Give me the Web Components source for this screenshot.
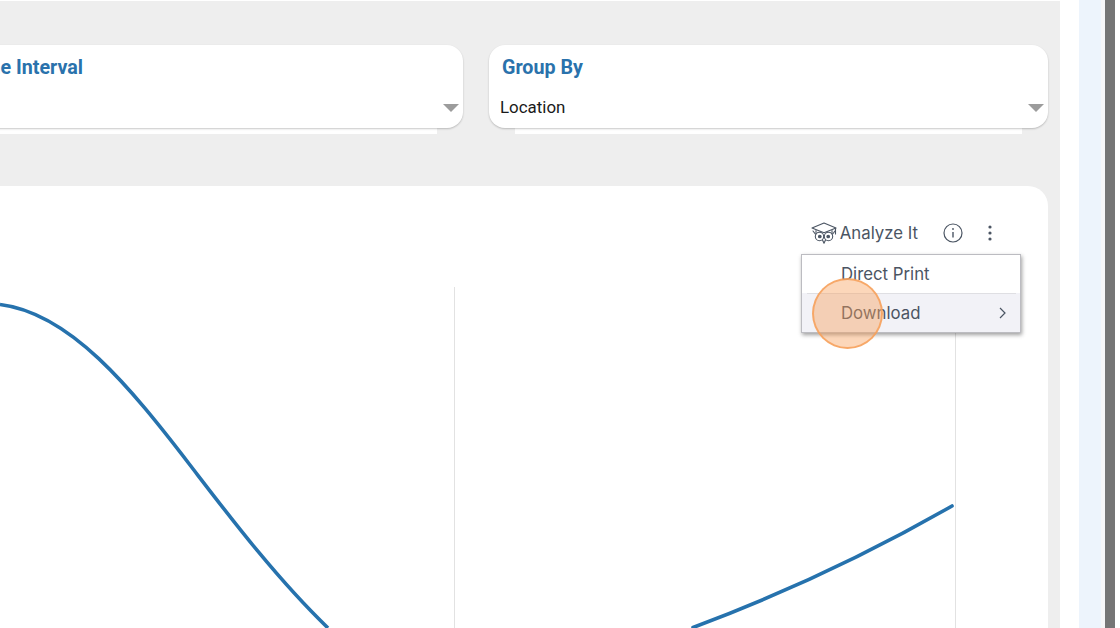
<!DOCTYPE html>
<html>
<head>
<meta charset="utf-8">
<style>
html, body { margin: 0; height: 100%; overflow: hidden; background: #fff; }
</style>
</head>
<body>
<app-shell>
  <filter-card slot="filters" label="Time Interval" style="flex:0 0 510px;margin-left:-47px" strip="26"></filter-card>
  <filter-card slot="filters" label="Group By" value="Location" style="flex:1" strip="26"></filter-card>
  <chart-card slot="chart"></chart-card>
</app-shell>
<script>
class AppShell extends HTMLElement {
    constructor() {
        super();
        this.attachShadow({ mode: "open" });
        this.shadowRoot.innerHTML = `
<style>
:host { display: flex; width: 1120px; height: 628px; overflow: hidden; }
#main { width: 1060px; flex: none; box-sizing: border-box; margin-top: 1px; padding: 44px 12px 0 0; background: #eeeeee; display: flex; flex-direction: column; overflow: hidden; }
#filters { display: flex; gap: 26px; height: 89px; flex: none; }
#chart { display: block; margin: 52px 0 0 -100px; flex: 1; min-height: 0; }
#gap { width: 19px; flex: none; }
#side { width: 22px; flex: none; background: #edf4fc; }
#rail { width: 4px; flex: none; background: #f6f6f8; }
#bar { width: 10px; flex: none; background: #757575; }
</style>
<div id="main">
  <div id="filters"><slot name="filters"></slot></div>
  <div id="chart"><slot name="chart"></slot></div>
</div>
<div id="gap"></div><div id="side"></div><div id="rail"></div><div id="bar"></div>`;
    }
}
customElements.define("app-shell", AppShell);

class FilterCard extends HTMLElement {
    constructor() {
        super();
        this.attachShadow({ mode: "open" });
    }
    connectedCallback() {
        const strip = this.getAttribute("strip") || 26;
        this.shadowRoot.innerHTML = `
<style>
:host { display: block; }
#card { position: relative; z-index: 1; box-sizing: border-box; height: 83px; background: #fff; border-radius: 16px; box-shadow: 0 1px 2px rgba(0,0,0,.22); padding: 12px 4px 0 11px; display: flex; flex-direction: column; }
#label { font: 700 19.700px/22px Roboto, sans-serif; color: #2a72ac; padding-left: 2px; }
#row { display: flex; align-items: center; justify-content: space-between; margin-top: 17px; height: 24px; }
#value { font: 400 16.900px/22px Roboto, sans-serif; color: #1a1a1a; padding-bottom: 2px; }
#arrow { width: 0; height: 0; border-left: 8px solid transparent; border-right: 8px solid transparent; border-top: 8px solid #9c9c9c; }
#strip { height: 6px; background: #fff; margin: 0 ${strip}px; }
</style>
<div id="card">
  <div id="label">${this.getAttribute("label")}</div>
  <div id="row"><span id="value">${this.getAttribute("value") || ""}</span><span id="arrow"></span></div>
</div>
<div id="strip"></div>`;
    }
}
customElements.define("filter-card", FilterCard);

class OwlIcon extends HTMLElement {
    constructor() {
        super();
        this.attachShadow({ mode: "open" });
        this.shadowRoot.innerHTML = `
<style>:host { display: block; width: 26px; height: 22px; } svg { display: block; }</style>
<svg width="26" height="22" viewBox="0 0 26 22" fill="none" stroke="#4b5563" stroke-width="1.100" stroke-linejoin="round" stroke-linecap="round">
  <path d="M1 6 13 1l12 5-12 4.800z"/>
  <path d="M5 8.500V12M21 8.500V12"/>
  <path d="M24.500 6.500V12"/>
  <circle cx="8.500" cy="14.500" r="4.200"/>
  <circle cx="17.500" cy="14.500" r="4.200"/>
  <circle cx="8.800" cy="14.500" r="1.300" fill="#4b5563"/>
  <circle cx="17.200" cy="14.500" r="1.300" fill="#4b5563"/>
  <path d="M11.500 18 13 21.300l1.500-3.300"/>
  <path d="M4.300 12 2 9M21.700 12 24 9"/>
</svg>`;
    }
}
customElements.define("owl-icon", OwlIcon);

class MenuItem extends HTMLElement {
    constructor() {
        super();
        this.attachShadow({ mode: "open" });
    }
    connectedCallback() {
        const more = this.hasAttribute("more");
        this.shadowRoot.innerHTML = `
<style>
:host { display: flex; align-items: center; justify-content: space-between; box-sizing: border-box; height: 38px; padding: 0 14px 0 39px; font: 400 16.800px/38px Inter, sans-serif; color: #4b5563; }
:host([active]) { height: 39px; padding-top: 1px; background: linear-gradient(#dfdfe3, #dfdfe3) 5px 0 / 209px 1px no-repeat, #f2f2f7; }
svg { display: block; }
</style>
<slot></slot>
${more ? `<svg width="7" height="12" viewBox="0 0 7 12" fill="none" stroke="#4b5563" stroke-width="1.200"><path d="M1 1l5 5-5 5"/></svg>` : ""}`;
    }
}
customElements.define("menu-item", MenuItem);

class PopupMenu extends HTMLElement {
    constructor() {
        super();
        this.attachShadow({ mode: "open" });
        this.shadowRoot.innerHTML = `
<style>
:host { display: block; position: absolute; left: 901px; top: 68px; width: 220px; box-sizing: border-box; background: #fff; border: 1px solid #bcbcc1; box-shadow: 1px 2px 4px rgba(0,0,0,.38); z-index: 2; }
</style>
<slot></slot>`;
    }
}
customElements.define("popup-menu", PopupMenu);

class ChartToolbar extends HTMLElement {
    constructor() {
        super();
        this.attachShadow({ mode: "open" });
        this.shadowRoot.innerHTML = `
<style>
:host { display: flex; align-items: center; justify-content: flex-end; height: 24px; padding: 35px 56px 0 0; color: #4b5563; }
#analyze { display: flex; align-items: center; gap: 3px; font: 400 16.800px/24px Inter, sans-serif; margin-right: 25px; }
svg { display: block; }
#dots { margin-left: 25px; }
</style>
<span id="analyze"><owl-icon></owl-icon>Analyze It</span>
<svg width="20" height="20" viewBox="0 0 20 20" fill="none" stroke="#4b5563" stroke-width="1.200"><circle cx="10" cy="10" r="9"/><path d="M10 9v5.500" stroke-width="1.400"/><circle cx="10" cy="6" r=".9" fill="#4b5563" stroke="none"/></svg>
<svg id="dots" width="4" height="16" viewBox="0 0 4 16" fill="#4b5563"><circle cx="2" cy="2" r="1.600"/><circle cx="2" cy="8" r="1.600"/><circle cx="2" cy="14" r="1.600"/></svg>`;
    }
}
customElements.define("chart-toolbar", ChartToolbar);

class ChartCard extends HTMLElement {
    constructor() {
        super();
        this.attachShadow({ mode: "open" });
        this.shadowRoot.innerHTML = `
<style>
:host { display: block; position: relative; height: 100%; background: #fff; border-radius: 20px 20px 0 0; }
#plot { position: absolute; left: 100px; top: 0; }
#tap { position: absolute; left: 912px; top: 92px; width: 71px; height: 71px; box-sizing: border-box; border-radius: 50%; background: rgba(247,160,90,.42); border: 2px solid rgba(247,160,90,.85); z-index: 3; }
</style>
<svg id="plot" width="1048" height="442" viewBox="0 186 1048 442" fill="none">
  <path d="M454.500 287V628M955.500 287V628" stroke="#e2e2e2"/>
  <path d="M0 304.500C70 313 130 387 190 465C225 510.500 275 577 328 628" stroke="#2672ad" stroke-width="3.600"/>
  <path d="M693 627.500C780 595 870 553 952 506" stroke="#2672ad" stroke-width="3.600" stroke-linecap="round"/>
</svg>
<chart-toolbar></chart-toolbar>
<popup-menu>
  <menu-item>Direct Print</menu-item>
  <menu-item active more>Download</menu-item>
</popup-menu>
<div id="tap"></div>`;
    }
}
customElements.define("chart-card", ChartCard);
</script>
</body>
</html>
